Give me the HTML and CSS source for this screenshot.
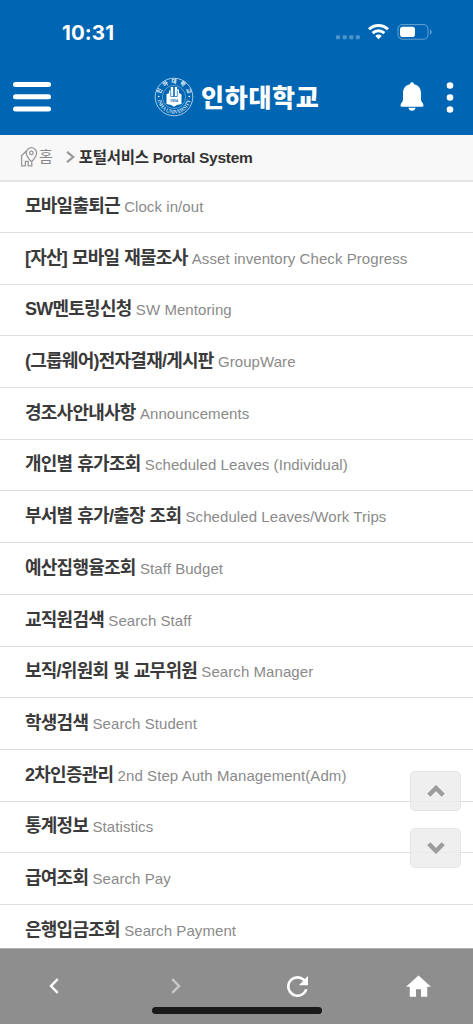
FILE: index.html
```html
<!DOCTYPE html>
<html lang="ko">
<head>
<meta charset="utf-8">
<meta name="viewport" content="width=device-width, initial-scale=1">
<title>인하대학교 포털서비스</title>
<link rel="stylesheet" href="styles.css">
</head>
<body>
<div class="app">
  <header class="header">
    <div class="status">
      <span class="time">10:31</span>
      <svg class="status-icons" width="100" height="24" viewBox="0 0 100 24" fill="#fff">
        <g opacity=".3"><rect x="1" y="15.200" width="4" height="4" rx="1"/><rect x="7.700" y="15.200" width="4" height="4" rx="1"/><rect x="14.300" y="15.200" width="4" height="4" rx="1"/><rect x="20.800" y="15.200" width="4" height="4" rx="1"/></g>
        <path d="M43.500 19.200l-3.200-3.300a4.500 4.500 0 0 1 6.400 0z"/>
        <g fill="none" stroke="#fff" stroke-width="2.900"><path d="M37.600 13.100a8.500 8.500 0 0 1 11.800 0"/><path d="M34 9.300a13.600 13.600 0 0 1 19 0"/></g>
        <rect x="63" y="4.600" width="30" height="14.600" rx="4.300" fill="none" stroke="#fff" stroke-opacity=".4"/>
        <rect x="65" y="6.700" width="15" height="10.400" rx="2.800"/>
        <path d="M95 9.500v5q1.500-.7 1.500-2.500t-1.500-2.500z" opacity=".45"/>
      </svg>
    </div>
    <div class="bar">
      <svg class="menu" width="38" height="30" viewBox="0 0 38 30" fill="#fff"><rect y="0" width="38" height="5" rx="2.500"/><rect y="12.200" width="38" height="5" rx="2.500"/><rect y="24.400" width="38" height="5" rx="2.500"/></svg>
      <div class="brand">
        <svg class="seal" width="40" height="40" viewBox="0 0 40 40">
          <defs><path id="top" d="M6.200 20a13.800 13.800 0 0 1 27.600 0"/><path id="bottom" d="M3.300 20a16.700 16.700 0 0 0 33.400 0"/></defs>
          <g fill="none" stroke="#fff"><circle cx="20" cy="20" r="18.800" stroke-width=".8" opacity=".8"/><circle cx="20" cy="20" r="11.600" stroke-width=".6" opacity=".6"/></g>
          <path d="M12.500 17.200l2.500-1.200v-2.500h1.800v-3.500h2.400v9.500h1.600V10h2.400v2.500h1.800V16l2.500 1.200V27l-4.500 1-3 1.800-3-1.800-4.500-1z" fill="#fff"/>
          <path d="M16.700 13.500v6h6.600v-6" fill="none" stroke="#0066b3" stroke-width=".7"/>
          <text class="seal-year" x="20" y="25" text-anchor="middle">1954</text>
          <text class="seal-ko"><textPath href="#top" startOffset="53%" text-anchor="middle">인하대학교</textPath></text>
          <text class="seal-en"><textPath href="#bottom" startOffset="50%" text-anchor="middle">INHA UNIVERSITY</textPath></text>
          <circle cx="4.700" cy="19.500" r=".8" fill="#fff"/><circle cx="35.300" cy="19.500" r=".8" fill="#fff"/>
        </svg>
        <span class="brand-name">인하대학교</span>
      </div>
      <svg class="bell" width="24" height="30" viewBox="0 0 24 30" fill="#fff"><path d="M10 2.300a2 2 0 0 1 4 0c4.500.8 7 4.400 7 9v6.500c0 2.200 2.500 3.200 2.500 5.700 0 .7-.5 1.200-1.200 1.200H1.700C1 24.700.5 24.200.5 23.500c0-2.500 2.500-3.500 2.500-5.700v-6.500c0-4.600 2.500-8.200 7-9zM8.500 25.800h7q-.5 3-3.500 3t-3.500-3z"/></svg>
      <svg class="more" width="8" height="31" viewBox="0 0 8 31" fill="#fff"><circle cx="4" cy="3.500" r="3.300"/><circle cx="4" cy="15.500" r="3.300"/><circle cx="4" cy="27.500" r="3.300"/></svg>
    </div>
  </header>

  <nav class="crumbs">
    <svg class="crumb-icon" width="18" height="20" viewBox="0 0 18 20" fill="none" stroke="#999" stroke-width="1.300"><path d="M6.300 4L1 9.300M1.600 9v9.800h3.800v-4.500h2.800v4.500h3.600v-3.500M11.500 14.800C8 11 6.200 8.200 6.200 5.900a5.200 5.200 0 0 1 10.400 0c0 2.300-1.600 5.100-5.100 8.900z"/><circle cx="11.400" cy="5.900" r="1.800"/></svg>
    <span class="crumb-home">홈</span>
    <svg class="crumb-sep" width="9" height="12" viewBox="0 0 9 12" fill="none" stroke="#999" stroke-width="2.200"><path d="M1 .8L7.200 6 1 11.200"/></svg>
    <span class="crumb-now">포털서비스 Portal System</span>
  </nav>

  <main class="list">
    <a class="row"><b>모바일출퇴근</b><span>Clock in/out</span></a>
    <a class="row"><b>[자산] 모바일 재물조사</b><span>Asset inventory Check Progress</span></a>
    <a class="row"><b>SW멘토링신청</b><span>SW Mentoring</span></a>
    <a class="row"><b>(그룹웨어)전자결재/게시판</b><span>GroupWare</span></a>
    <a class="row"><b>경조사안내사항</b><span>Announcements</span></a>
    <a class="row"><b>개인별 휴가조회</b><span>Scheduled Leaves (Individual)</span></a>
    <a class="row"><b>부서별 휴가/출장 조회</b><span>Scheduled Leaves/Work Trips</span></a>
    <a class="row"><b>예산집행율조회</b><span>Staff Budget</span></a>
    <a class="row"><b>교직원검색</b><span>Search Staff</span></a>
    <a class="row"><b>보직/위원회 및 교무위원</b><span>Search Manager</span></a>
    <a class="row"><b>학생검색</b><span>Search Student</span></a>
    <a class="row"><b>2차인증관리</b><span>2nd Step Auth Management(Adm)</span></a>
    <a class="row"><b>통계정보</b><span>Statistics</span></a>
    <a class="row"><b>급여조회</b><span>Search Pay</span></a>
    <a class="row"><b>은행입금조회</b><span>Search Payment</span></a>
  </main>

  <div class="scrollers">
    <button class="scroll-btn"><svg width="18" height="12" viewBox="0 0 18 12" fill="none" stroke="#9c9c9c" stroke-width="4.400"><path d="M1.800 10.200L9 3l7.200 7.200"/></svg></button>
    <button class="scroll-btn"><svg width="18" height="12" viewBox="0 0 18 12" fill="none" stroke="#9c9c9c" stroke-width="4.400"><path d="M1.800 1.800L9 9l7.200-7.200"/></svg></button>
  </div>

  <footer class="toolbar">
    <div class="tools">
      <span class="tool"><svg width="10" height="16" viewBox="0 0 10 16" fill="none" stroke="#fff" stroke-width="2.400"><path d="M8.700 1.200L2 8l6.700 6.800"/></svg></span>
      <span class="tool"><svg width="10" height="16" viewBox="0 0 10 16" fill="none" stroke="#c9c9c9" stroke-width="2.400"><path d="M1.300 1.200L8 8l-6.700 6.800"/></svg></span>
      <span class="tool"><svg width="21" height="21" viewBox="0 0 16 16" fill="#fff"><path d="M13.650 2.350A7.950 7.950 0 0 0 8 0a8 8 0 1 0 7.730 10h-2.080A6 6 0 1 1 8 2c1.660 0 3.140.690 4.220 1.780L9 7h7V0z"/></svg></span>
      <span class="tool"><svg width="25" height="22" viewBox="0 0 20 17" fill="#fff"><path d="M8 17v-6h4v6h5V9h3L10 0 0 9h3v8z"/></svg></span>
    </div>
    <div class="home-bar"></div>
  </footer>
</div>
</body>
</html>
```
FILE: styles.css
```css
* { box-sizing: border-box; }
body {
  margin: 0;
  background: #fff;
  font-family: "Liberation Sans", "Noto Sans CJK KR", sans-serif;
}
svg { display: block; flex: none; }
.app {
  position: relative;
  display: flex;
  flex-direction: column;
  height: 1024px;
  overflow: hidden;
}
.header { flex: none; height: 135px; background: #0066b3; color: #fff; }
.status {
  display: flex;
  justify-content: space-between;
  align-items: center;
  height: 64px;
  padding: 0 38px 0 62px;
}
.time { font: 700 20.500px Inter, sans-serif; letter-spacing: .1px; }
.bar { display: flex; align-items: center; height: 66px; padding: 0 19px 0 13px; }
.brand { display: flex; align-items: center; margin-left: 103px; }
.brand-name {
  margin-left: 7px;
  padding-bottom: 2px;
  font: 900 25px/38px "Noto Sans CJK KR", sans-serif;
  letter-spacing: .7px;
}
.bell { margin-left: auto; }
.more { margin-left: 22px; }
.seal-year { font: 700 3.500px "Liberation Sans", sans-serif; fill: #0066b3; }
.seal-ko { font: 700 5.500px "Noto Sans CJK KR", sans-serif; fill: #fff; letter-spacing: 3px; }
.seal-en { font: 400 5.300px "Liberation Serif", serif; fill: #fff; }
.crumbs {
  display: flex;
  flex: none;
  align-items: center;
  height: 47px;
  padding: 0 20px 2px;
  border-bottom: 2px solid #e6e6e6;
  background: #f8f8f8;
}
.crumb-home { margin-left: 1px; padding-bottom: 2px; color: #888; font-size: 15px; }
.crumb-sep { margin-left: 13px; }
.crumb-now {
  margin-left: 4px;
  padding-bottom: 2px;
  color: #333;
  font-size: 15.500px;
  font-weight: 700;
  letter-spacing: -.28px;
  white-space: nowrap;
}
.list { flex: none; height: 766px; overflow: hidden; }
.row {
  display: flex;
  align-items: baseline;
  height: 51.700px;
  padding: 10.700px 0 0 25px;
  border-bottom: 1px solid #dedede;
  line-height: 29px;
  white-space: nowrap;
}
.row:first-child { height: 51px; padding-top: 10px; }
.row b { color: #3a3a3a; font-size: 18px; letter-spacing: -.75px; word-spacing: .6px; }
.row span { margin-left: 4.300px; color: #8a8a8a; font-size: 15px; letter-spacing: .07px; }
.scrollers {
  position: absolute;
  top: 771px;
  right: 12px;
  display: flex;
  flex-direction: column;
  gap: 17px;
}
.scroll-btn {
  display: flex;
  align-items: center;
  justify-content: center;
  width: 51px;
  height: 40px;
  padding: 0 0 0 1px;
  border: 1px solid #e6e6e6;
  border-radius: 5px;
  background: rgba(236, 236, 236, .85);
}
.toolbar { flex: none; height: 76px; border-top: 1px solid #b0b0b0; background: #8e8e8e; }
.tools {
  display: flex;
  align-items: center;
  justify-content: space-between;
  height: 58px;
  padding: 16px 40px 0 40px;
}
.tool { display: flex; justify-content: center; width: 28px; }
.home-bar { width: 170px; height: 7px; margin: 0 auto; border-radius: 4px; background: #1a1a1a; }
```
